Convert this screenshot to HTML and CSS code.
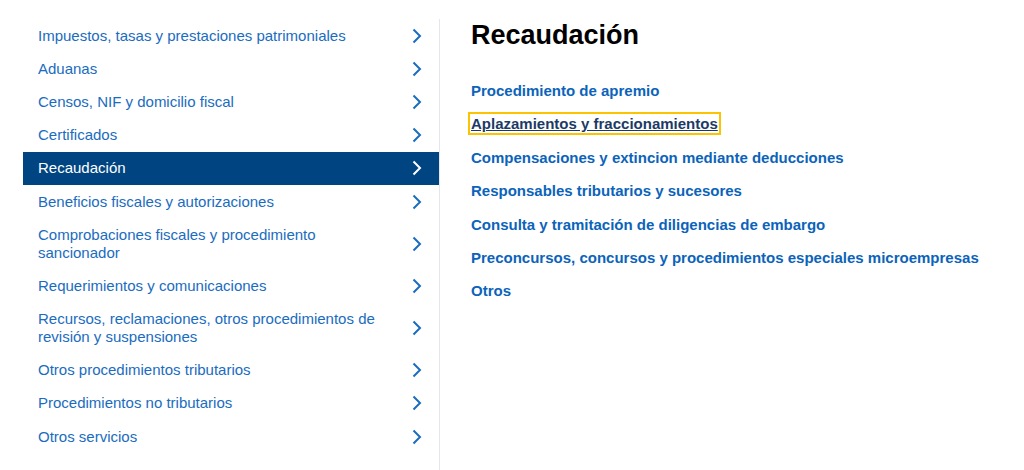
FILE: index.html
```html
<!DOCTYPE html>
<html lang="es">
<head>
<meta charset="utf-8">
<title>Recaudación</title>
<link rel="stylesheet" href="styles.css">
</head>
<body>
<div class="page">
  <nav class="sidenav">
    <ul class="navlist">
      <li><a class="navitem" href="#"><span>Impuestos, tasas y prestaciones patrimoniales</span><svg class="chev" viewBox="0 0 10 16"><path d="M1.5 1.5 L8 8 L1.5 14.5"/></svg></a></li>
      <li><a class="navitem" href="#"><span>Aduanas</span><svg class="chev" viewBox="0 0 10 16"><path d="M1.5 1.5 L8 8 L1.5 14.5"/></svg></a></li>
      <li><a class="navitem" href="#"><span>Censos, NIF y domicilio fiscal</span><svg class="chev" viewBox="0 0 10 16"><path d="M1.5 1.5 L8 8 L1.5 14.5"/></svg></a></li>
      <li><a class="navitem" href="#"><span>Certificados</span><svg class="chev" viewBox="0 0 10 16"><path d="M1.5 1.5 L8 8 L1.5 14.5"/></svg></a></li>
      <li><a class="navitem active" href="#"><span>Recaudación</span><svg class="chev" viewBox="0 0 10 16"><path d="M1.5 1.5 L8 8 L1.5 14.5"/></svg></a></li>
      <li><a class="navitem" href="#"><span>Beneficios fiscales y autorizaciones</span><svg class="chev" viewBox="0 0 10 16"><path d="M1.5 1.5 L8 8 L1.5 14.5"/></svg></a></li>
      <li><a class="navitem" href="#"><span>Comprobaciones fiscales y procedimiento sancionador</span><svg class="chev" viewBox="0 0 10 16"><path d="M1.5 1.5 L8 8 L1.5 14.5"/></svg></a></li>
      <li><a class="navitem" href="#"><span>Requerimientos y comunicaciones</span><svg class="chev" viewBox="0 0 10 16"><path d="M1.5 1.5 L8 8 L1.5 14.5"/></svg></a></li>
      <li><a class="navitem" href="#"><span>Recursos, reclamaciones, otros procedimientos de revisión y suspensiones</span><svg class="chev" viewBox="0 0 10 16"><path d="M1.5 1.5 L8 8 L1.5 14.5"/></svg></a></li>
      <li><a class="navitem" href="#"><span>Otros procedimientos tributarios</span><svg class="chev" viewBox="0 0 10 16"><path d="M1.5 1.5 L8 8 L1.5 14.5"/></svg></a></li>
      <li><a class="navitem" href="#"><span>Procedimientos no tributarios</span><svg class="chev" viewBox="0 0 10 16"><path d="M1.5 1.5 L8 8 L1.5 14.5"/></svg></a></li>
      <li><a class="navitem" href="#"><span>Otros servicios</span><svg class="chev" viewBox="0 0 10 16"><path d="M1.5 1.5 L8 8 L1.5 14.5"/></svg></a></li>
    </ul>
  </nav>
  <main class="content">
    <h1 class="title">Recaudación</h1>
    <ul class="links">
      <li><a href="#">Procedimiento de apremio</a></li>
      <li><a class="focused" href="#">Aplazamientos y fraccionamientos</a></li>
      <li><a href="#">Compensaciones y extincion mediante deducciones</a></li>
      <li><a href="#">Responsables tributarios y sucesores</a></li>
      <li><a href="#">Consulta y tramitación de diligencias de embargo</a></li>
      <li><a href="#">Preconcursos, concursos y procedimientos especiales microempresas</a></li>
      <li><a href="#">Otros</a></li>
    </ul>
  </main>
</div>
</body>
</html>
```

FILE: styles.css
```css
* { box-sizing: border-box; }
html, body { margin: 0; padding: 0; background: #fff; }
body { font-family: "Liberation Sans", Arial, sans-serif; }
.page {
  display: flex;
  align-items: stretch;
  padding: 19px 0 0 23px;
  min-height: 470px;
}
.sidenav {
  width: 417px;
  flex: none;
  border-right: 1px solid #e3e6ea;
  padding-bottom: 18px;
}
.navlist { list-style: none; margin: 0; padding: 0; }
.navitem {
  display: flex;
  align-items: center;
  justify-content: space-between;
  gap: 20px;
  padding: 7.6px 17px 7.6px 15px;
  font-size: 15px;
  line-height: 18px;
  color: #1a6cc0;
  text-decoration: none;
}
.navitem span { max-width: 345px; }
.navitem.active { background: #004581; color: #fff; }
.chev { width: 10px; height: 16px; flex: none; }
.chev path { fill: none; stroke: #1a6cc0; stroke-width: 2; stroke-linecap: butt; stroke-linejoin: miter; }
.navitem.active .chev path { stroke: #fff; }
.content { padding: 0 0 0 31px; margin-top: -1px; }
.title {
  margin: 0;
  font-size: 27px;
  line-height: 34px;
  font-weight: bold;
  color: #000;
}
.links { list-style: none; margin: 29px 0 0 0; padding: 0; }
.links li { margin: 0 0 13.4px 0; line-height: 20px; }
.links a {
  font-size: 15px;
  font-weight: bold;
  color: #0b63ba;
  text-decoration: none;
}
.links a.focused {
  color: #1c3a66;
  text-decoration: underline;
  outline: 2px solid #fcc400;
  outline-offset: 1px;
}
```
